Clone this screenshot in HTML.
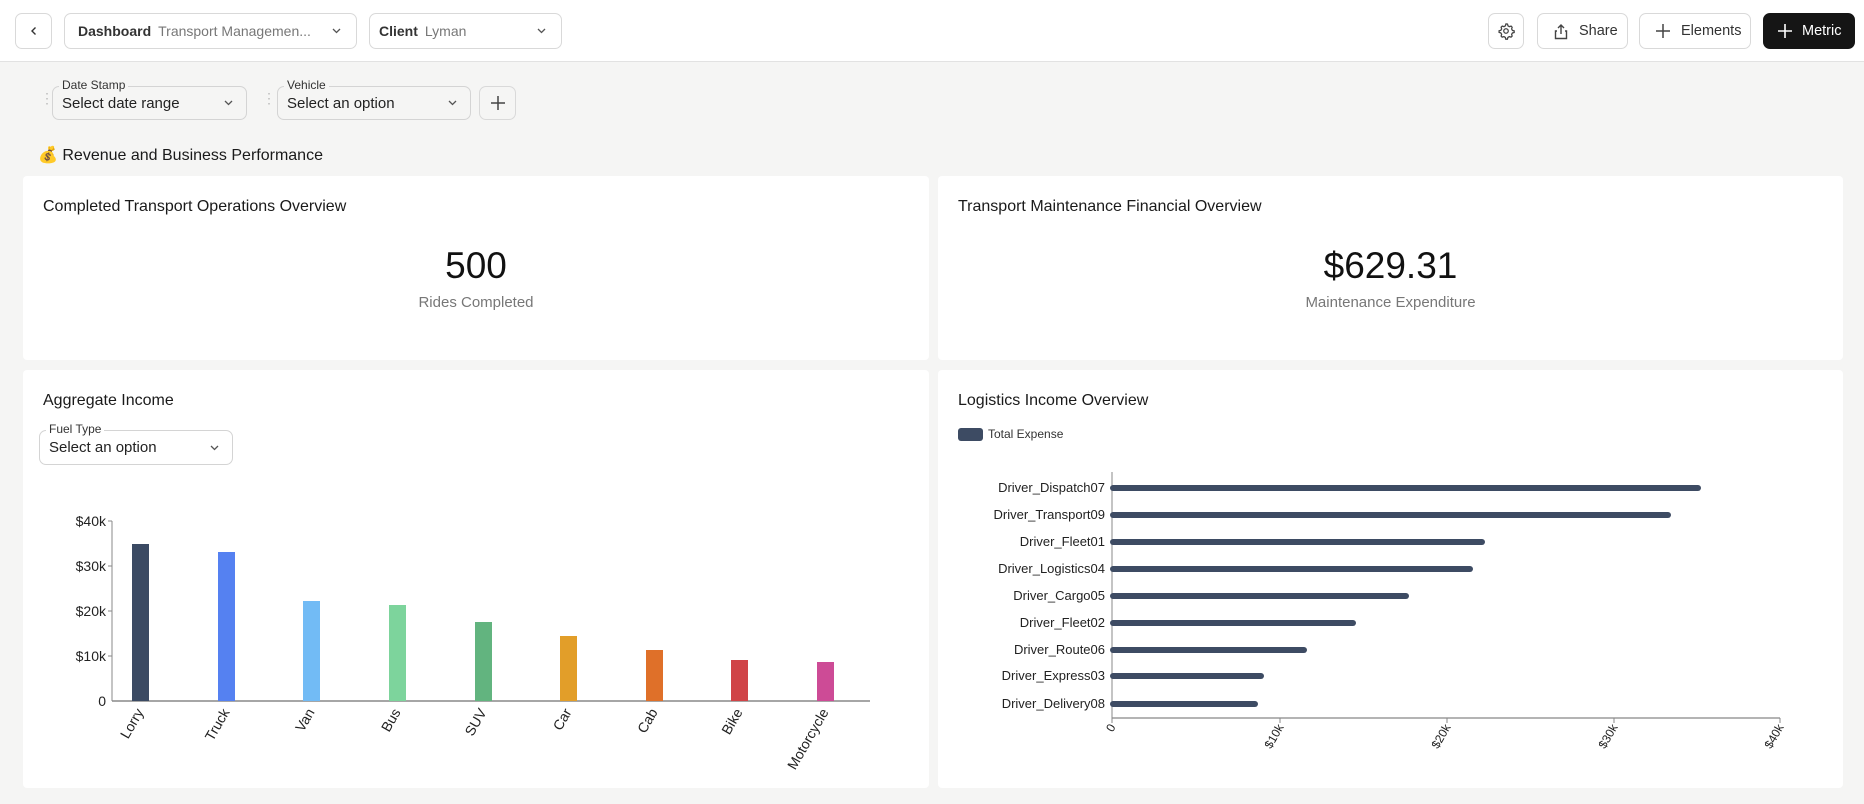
<!DOCTYPE html>
<html><head><meta charset="utf-8"><style>
*{box-sizing:border-box;margin:0;padding:0}
body{width:1864px;height:804px;background:#f5f5f4;font-family:"Liberation Sans",sans-serif;color:#111;position:relative;overflow:hidden}
.abs{position:absolute}
.hdr{left:0;top:0;width:1864px;height:62px;background:#fff;border-bottom:1px solid #e2e2e2}
.btn{position:absolute;border:1px solid #d9d9d9;border-radius:7px;background:#fff;display:flex;align-items:center;font-size:14.5px;color:#333}
.sel{position:absolute;border:1px solid #d4d4d4;border-radius:7px;background:#fff;display:flex;align-items:center;padding-left:9px;font-size:15px;color:#222}
.chev{position:absolute;right:12px;top:50%;margin-top:-5px}
.lbl{position:absolute;font-size:12px;color:#333;background:#f5f5f4;padding:0 3px;top:-9px;left:6px;line-height:14px}
.card{position:absolute;background:#fff;border-radius:4px}
.ttl{position:absolute;left:20px;top:22px;font-size:16px;color:#1a1a1a}
</style></head><body>
<div class="abs hdr"></div>
<div class="btn" style="left:15px;top:13px;width:37px;height:36px;justify-content:center"><svg width="12" height="12" viewBox="0 0 12 12"><path d="M7.5 2.5 4 6l3.5 3.5" fill="none" stroke="#333" stroke-width="1.4"/></svg></div>
<div class="btn" style="left:64px;top:13px;width:293px;height:36px;padding-left:13px"><b style="font-weight:bold;color:#333;font-size:14px">Dashboard</b><span style="margin-left:7px;color:#777;font-size:14px">Transport Managemen...</span><svg class="chev" style="right:14px" width="11" height="10" viewBox="0 0 11 10"><path d="M2 3l3.5 3.5L9 3" fill="none" stroke="#555" stroke-width="1.3"/></svg></div>
<div class="btn" style="left:369px;top:13px;width:193px;height:36px;padding-left:9px"><b style="color:#333;font-size:14px">Client</b><span style="margin-left:7px;color:#777;font-size:14px">Lyman</span><svg class="chev" style="right:14px" width="11" height="10" viewBox="0 0 11 10"><path d="M2 3l3.5 3.5L9 3" fill="none" stroke="#555" stroke-width="1.3"/></svg></div>
<div class="btn" style="left:1488px;top:13px;width:36px;height:36px;justify-content:center"><svg width="18" height="18" viewBox="0 0 24 24" fill="none" stroke="#444" stroke-width="1.7"><circle cx="12" cy="12" r="3"/><path d="M12 2.5l2 .3.6 2.3 1.9 1.1 2.3-.7 1.4 1.5-.7 2.3 1.1 1.9 2.3.6v2.2l-2.3.6-1.1 1.9.7 2.3-1.5 1.4-2.3-.7-1.9 1.1-.6 2.3h-2.2l-.6-2.3-1.9-1.1-2.3.7-1.4-1.5.7-2.3-1.1-1.9-2.3-.6v-2.2l2.3-.6 1.1-1.9-.7-2.3 1.5-1.4 2.3.7 1.9-1.1.6-2.3z"/></svg></div>
<div class="btn" style="left:1537px;top:13px;width:91px;height:36px;padding-left:15px"><svg width="16" height="17" viewBox="0 0 16 17" fill="none" stroke="#444" stroke-width="1.4"><path d="M8 11V2M5 5l3-3 3 3M4 8H2.5v7.5h11V8H12"/></svg><span style="margin-left:10px">Share</span></div>
<div class="btn" style="left:1639px;top:13px;width:112px;height:36px;padding-left:15px"><svg width="16" height="16" viewBox="0 0 16 16" stroke="#444" stroke-width="1.5"><path d="M8 1v14M1 8h14"/></svg><span style="margin-left:10px">Elements</span></div>
<div class="btn" style="left:1763px;top:13px;width:92px;height:36px;padding-left:13px;background:#151515;border-color:#151515;color:#fff"><svg width="16" height="16" viewBox="0 0 16 16" stroke="#fff" stroke-width="1.6"><path d="M8 1v14M1 8h14"/></svg><span style="margin-left:9px">Metric</span></div>

<div class="abs" style="left:40px;top:95px;color:#bbb;font-size:14px;line-height:6px">⋮</div>
<div class="sel" style="left:52px;top:86px;width:195px;height:34px;background:#f5f5f4"><span class="lbl">Date Stamp</span>Select date range<svg class="chev" width="11" height="10" viewBox="0 0 11 10"><path d="M2 3l3.5 3.5L9 3" fill="none" stroke="#555" stroke-width="1.3"/></svg></div>
<div class="abs" style="left:262px;top:95px;color:#bbb;font-size:14px;line-height:6px">⋮</div>
<div class="sel" style="left:277px;top:86px;width:194px;height:34px;background:#f5f5f4"><span class="lbl">Vehicle</span>Select an option<svg class="chev" width="11" height="10" viewBox="0 0 11 10"><path d="M2 3l3.5 3.5L9 3" fill="none" stroke="#555" stroke-width="1.3"/></svg></div>
<div class="btn" style="left:479px;top:86px;width:37px;height:34px;justify-content:center;background:#f5f5f4"><svg width="16" height="16" viewBox="0 0 16 16" stroke="#444" stroke-width="1.5"><path d="M8 1v14M1 8h14"/></svg></div>

<div class="abs" style="left:38px;top:145px;font-size:16px;color:#1a1a1a;line-height:22px"><span style="font-size:16px">💰</span> Revenue and Business Performance</div>

<div class="card" style="left:23px;top:176px;width:906px;height:184px">
<div class="ttl">Completed Transport Operations Overview</div>
<div class="abs" style="left:0;width:906px;top:69px;text-align:center;font-size:37px;color:#111">500</div>
<div class="abs" style="left:0;width:906px;top:118px;text-align:center;font-size:15px;color:#777">Rides Completed</div>
</div>
<div class="card" style="left:938px;top:176px;width:905px;height:184px">
<div class="ttl">Transport Maintenance Financial Overview</div>
<div class="abs" style="left:0;width:905px;top:69px;text-align:center;font-size:37px;color:#111">$629.31</div>
<div class="abs" style="left:0;width:905px;top:118px;text-align:center;font-size:15px;color:#777">Maintenance Expenditure</div>
</div>

<div class="card" style="left:23px;top:370px;width:906px;height:418px">
<div class="ttl" style="top:22px">Aggregate Income</div>
<div class="sel" style="left:16px;top:60px;width:194px;height:35px"><span class="lbl" style="background:#fff">Fuel Type</span>Select an option<svg class="chev" width="11" height="10" viewBox="0 0 11 10"><path d="M2 3l3.5 3.5L9 3" fill="none" stroke="#555" stroke-width="1.3"/></svg></div>
</div>
<svg class="abs" style="left:0;top:0" width="1864" height="804">
<g font-family="Liberation Sans,sans-serif" font-size="14" fill="#222">
<line x1="112" y1="521" x2="112" y2="701" stroke="#888"/>
<line x1="112" y1="701" x2="870" y2="701" stroke="#888" stroke-width="1.5"/>
<g text-anchor="end">
<text x="106" y="526">$40k</text><text x="106" y="571">$30k</text><text x="106" y="616">$20k</text><text x="106" y="661">$10k</text><text x="106" y="706">0</text></g>
<g stroke="#888"><line x1="108" y1="521" x2="112" y2="521"/><line x1="108" y1="566" x2="112" y2="566"/><line x1="108" y1="611" x2="112" y2="611"/><line x1="108" y1="656" x2="112" y2="656"/></g>
<rect x="132" y="544" width="17" height="157" fill="#3b4a63"/>
<rect x="218" y="552" width="17" height="149" fill="#5581f1"/>
<rect x="303" y="601" width="17" height="100" fill="#72bbf5"/>
<rect x="389" y="605" width="17" height="96" fill="#7dd49c"/>
<rect x="475" y="622" width="17" height="79" fill="#62b47f"/>
<rect x="560" y="636" width="17" height="65" fill="#e29e29"/>
<rect x="646" y="650" width="17" height="51" fill="#df7029"/>
<rect x="731" y="660" width="17" height="41" fill="#d04447"/>
<rect x="817" y="662" width="17" height="39" fill="#cd4b96"/>
<g text-anchor="end" font-size="14">
<text transform="translate(144,712) rotate(-60)">Lorry</text>
<text transform="translate(230,712) rotate(-60)">Truck</text>
<text transform="translate(315,712) rotate(-60)">Van</text>
<text transform="translate(401,712) rotate(-60)">Bus</text>
<text transform="translate(487,712) rotate(-60)">SUV</text>
<text transform="translate(572,712) rotate(-60)">Car</text>
<text transform="translate(658,712) rotate(-60)">Cab</text>
<text transform="translate(743,712) rotate(-60)">Bike</text>
<text transform="translate(829,712) rotate(-60)">Motorcycle</text>
</g>
</g>
</svg>

<div class="card" style="left:938px;top:370px;width:905px;height:418px">
<div class="ttl" style="top:22px">Logistics Income Overview</div>
<div class="abs" style="left:20px;top:58px;width:25px;height:13px;border-radius:3px;background:#3d4b63"></div>
<div class="abs" style="left:50px;top:57px;font-size:12px;color:#333">Total Expense</div>
</div>
<svg class="abs" style="left:0;top:0" width="1864" height="804">
<g font-family="Liberation Sans,sans-serif" font-size="13" fill="#222">
<line x1="1112" y1="472" x2="1112" y2="718" stroke="#888"/>
<line x1="1112" y1="718" x2="1780" y2="718" stroke="#888" stroke-width="1.3"/>
<g stroke="#3d4b63" stroke-width="6" stroke-linecap="round">
<line x1="1113" y1="488" x2="1698" y2="488"/>
<line x1="1113" y1="515" x2="1668" y2="515"/>
<line x1="1113" y1="542" x2="1482" y2="542"/>
<line x1="1113" y1="569" x2="1470" y2="569"/>
<line x1="1113" y1="596" x2="1406" y2="596"/>
<line x1="1113" y1="623" x2="1353" y2="623"/>
<line x1="1113" y1="650" x2="1304" y2="650"/>
<line x1="1113" y1="676" x2="1261" y2="676"/>
<line x1="1113" y1="704" x2="1255" y2="704"/>
</g>
<g text-anchor="end">
<text x="1105" y="492">Driver_Dispatch07</text>
<text x="1105" y="519">Driver_Transport09</text>
<text x="1105" y="546">Driver_Fleet01</text>
<text x="1105" y="573">Driver_Logistics04</text>
<text x="1105" y="600">Driver_Cargo05</text>
<text x="1105" y="627">Driver_Fleet02</text>
<text x="1105" y="654">Driver_Route06</text>
<text x="1105" y="680">Driver_Express03</text>
<text x="1105" y="708">Driver_Delivery08</text>
</g>
<g stroke="#888"><line x1="1280" y1="718" x2="1280" y2="723"/><line x1="1447" y1="718" x2="1447" y2="723"/><line x1="1614" y1="718" x2="1614" y2="723"/><line x1="1780" y1="718" x2="1780" y2="723"/><line x1="1112" y1="718" x2="1112" y2="723"/></g>
<g text-anchor="end" font-size="12">
<text transform="translate(1116,727) rotate(-60)">0</text>
<text transform="translate(1284,727) rotate(-60)">$10k</text>
<text transform="translate(1451,727) rotate(-60)">$20k</text>
<text transform="translate(1618,727) rotate(-60)">$30k</text>
<text transform="translate(1784,727) rotate(-60)">$40k</text>
</g>
</g>
</svg>
</body></html>
